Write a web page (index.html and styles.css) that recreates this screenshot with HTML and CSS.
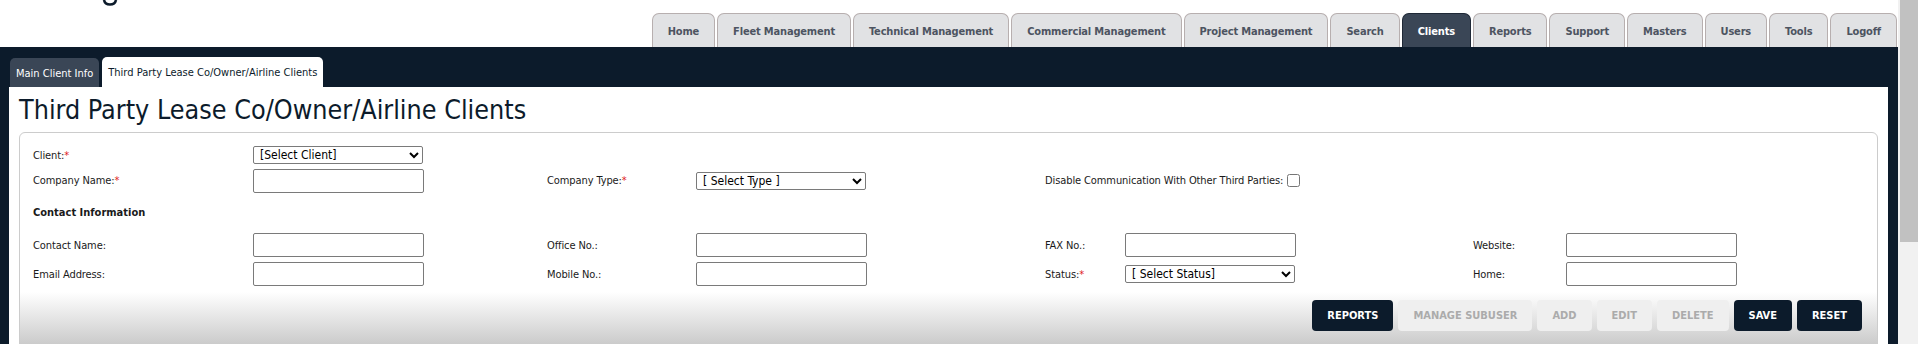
FILE: index.html
```html
<html>
    <head>
        <meta charset="utf-8" />
        <title>Third Party Lease Co/Owner/Airline Clients</title>
        <link rel="stylesheet" href="styles.css">
    </head>
    <body>
        <div class="window">
            <div class="page">
                <div class="header">
                    <div class="logo">
                        <svg width="16" height="6" viewBox="0 0 16 6"><path d="M2 0 Q3 4.5 8 4.5 Q13 4.5 14 0" fill="none" stroke="#0c1b2b" stroke-width="2.6"/></svg>
                    </div>
                    <div class="nav">
                        <a href="#">Home</a>
                        <a href="#">Fleet Management</a>
                        <a href="#">Technical Management</a>
                        <a href="#">Commercial Management</a>
                        <a href="#">Project Management</a>
                        <a href="#">Search</a>
                        <a href="#" class="active">Clients</a>
                        <a href="#">Reports</a>
                        <a href="#">Support</a>
                        <a href="#">Masters</a>
                        <a href="#">Users</a>
                        <a href="#">Tools</a>
                        <a href="#">Logoff</a>
                    </div>
                </div>
                <div class="frame">
                    <div class="subtabs">
                        <a href="#" class="subtab">Main Client Info</a>
                        <a href="#" class="subtab active">Third Party Lease Co/Owner/Airline Clients</a>
                    </div>
                    <div class="content">
                        <h1>Third Party Lease Co/Owner/Airline Clients</h1>
                        <div class="panel">
                            <div class="form-grid">
                                <label class="c1">Client:<span class="req">*</span></label>
                                <select class="c2"><option>[Select Client]</option></select>

                                <label class="c1">Company Name:<span class="req">*</span></label>
                                <input type="text" class="c2" />
                                <label class="c3">Company Type:<span class="req">*</span></label>
                                <select class="c4"><option>[ Select Type ]</option></select>
                                <div class="c5 check-field">
                                    <label for="disable">Disable Communication With Other Third Parties:</label>
                                    <input type="checkbox" id="disable" />
                                </div>

                                <div class="section-title">Contact Information</div>

                                <label class="c1">Contact Name:</label>
                                <input type="text" class="c2" />
                                <label class="c3">Office No.:</label>
                                <input type="text" class="c4" />
                                <label class="c5">FAX No.:</label>
                                <input type="text" class="c6" />
                                <label class="c7">Website:</label>
                                <input type="text" class="c8" />

                                <label class="c1">Email Address:</label>
                                <input type="text" class="c2" />
                                <label class="c3">Mobile No.:</label>
                                <input type="text" class="c4" />
                                <label class="c5">Status:<span class="req">*</span></label>
                                <select class="c6"><option>[ Select Status]</option></select>
                                <label class="c7">Home:</label>
                                <input type="text" class="c8" />
                            </div>
                            <div class="button-bar">
                                <button type="button">REPORTS</button>
                                <button type="button" disabled>MANAGE SUBUSER</button>
                                <button type="button" disabled>ADD</button>
                                <button type="button" disabled>EDIT</button>
                                <button type="button" disabled>DELETE</button>
                                <button type="button">SAVE</button>
                                <button type="button">RESET</button>
                            </div>
                        </div>
                    </div>
                </div>
            </div>
            <div class="scrollbar"><div class="thumb"></div></div>
        </div>
    </body>
</html>
```

FILE: styles.css
```css
body{
    margin: 0;
    font-family: "DejaVu Sans Condensed", "DejaVu Sans", sans-serif;
    font-stretch: condensed;
    color: #1a1a1a;
}

.window{
    display: flex;
    height: 344px;
    overflow: hidden;
    background-color: #fff;
}

.page{
    flex: 1;
    display: flex;
    flex-direction: column;
    min-height: 0;
}

.scrollbar{
    width: 20px;
    background-color: #f1f1f1;
    display: flex;
    justify-content: flex-end;
}

.scrollbar .thumb{
    width: 18px;
    height: 242px;
    background-color: #c1c1c1;
}

.header{
    flex-shrink: 0;
    height: 47px;
    display: flex;
    justify-content: space-between;
    align-items: flex-end;
}

.logo{
    align-self: flex-start;
    margin-left: 102px;
    height: 6px;
    line-height: 0;
}

.nav{
    display: flex;
    margin-right: 1px;
}

.nav a{
    height: 33px;
    line-height: 35px;
    margin-left: 2px;
    padding: 0 15px;
    border: 1px solid #b7afaf;
    border-bottom: none;
    border-radius: 7px 7px 0 0;
    background-color: #e1e2e4;
    color: #4d5461;
    font-size: 11px;
    letter-spacing: -0.17px;
    font-weight: bold;
    text-decoration: none;
}

.nav a.active{
    background-color: #3a4656;
    border-color: #1e2836;
    color: #fff;
}

.frame{
    flex: 1;
    min-height: 0;
    display: flex;
    flex-direction: column;
    background-color: #0c1b2b;
    padding: 10px 10px 0 9px;
}

.subtabs{
    flex-shrink: 0;
    display: flex;
    align-items: flex-end;
    height: 30px;
}

.subtab{
    height: 29px;
    line-height: 31px;
    margin-left: 1px;
    padding: 0 6px;
    border-radius: 5px 5px 0 0;
    background-color: #3a4656;
    color: #fff;
    font-size: 11px;
    text-decoration: none;
}

.subtab.active{
    height: 30px;
    line-height: 32px;
    margin-left: 3px;
    background-color: #fff;
    color: #0c1b2b;
}

.content{
    flex: 1;
    min-height: 0;
    background-color: #fff;
    padding: 7px 0 0 10px;
}

h1{
    margin: 0;
    font-size: 26.7px;
    line-height: 32px;
    font-weight: normal;
    color: #0c1b2b;
}

.panel{
    margin: 6px 10px 0 0;
    border: 1px solid #cccccc;
    border-radius: 6px;
    overflow: hidden;
}

.form-grid{
    display: grid;
    grid-template-columns: 220px 294px 149px 349px 80px 348px 93px 171px;
    grid-template-rows: 18px 23px 31px 24px 24px;
    row-gap: 5px;
    align-items: center;
    padding: 13px 0 0 13px;
    font-size: 11px;
}

.form-grid label{
    letter-spacing: -0.1px;
}

.c1{ grid-column: 1; }
.c2{ grid-column: 2; }
.c3{ grid-column: 3; }
.c4{ grid-column: 4; }
.c5{ grid-column: 5; }
.c6{ grid-column: 6; }
.c7{ grid-column: 7; }
.c8{ grid-column: 8; }

.req{
    color: #e0201c;
}

.check-field{
    grid-column: 5 / span 4;
    display: flex;
    align-items: center;
}

.check-field input{
    width: 13px;
    height: 13px;
    margin: 0 0 0 4px;
}

.section-title{
    grid-column: 1 / -1;
    font-weight: bold;
}

.form-grid input[type=text]{
    box-sizing: border-box;
    width: 171px;
    height: 24px;
    margin: 0;
    border: 1px solid #7a7a7a;
    border-radius: 2px;
}

.form-grid select{
    box-sizing: border-box;
    width: 170px;
    height: 18px;
    margin: 0;
    padding: 0 2px;
    border: 1px solid #7a7a7a;
    border-radius: 2px;
    background-color: #fff;
    color: #000;
    font-family: "DejaVu Sans Condensed", "DejaVu Sans", sans-serif;
    font-size: 12px;
}

.button-bar{
    display: flex;
    justify-content: flex-end;
    gap: 5px;
    margin-top: 6px;
    padding: 8px 15px 20px 0;
    background: linear-gradient(#ffffff, #c4c4c4);
}

.button-bar button{
    height: 31px;
    padding: 0 15px;
    border: none;
    border-radius: 4px;
    background-color: #0c1b2b;
    color: #fff;
    font-family: "DejaVu Sans Condensed", "DejaVu Sans", sans-serif;
    font-size: 11px;
    font-weight: bold;
}

.button-bar button:disabled{
    background-color: #efefef;
    color: #ababab;
}
```
